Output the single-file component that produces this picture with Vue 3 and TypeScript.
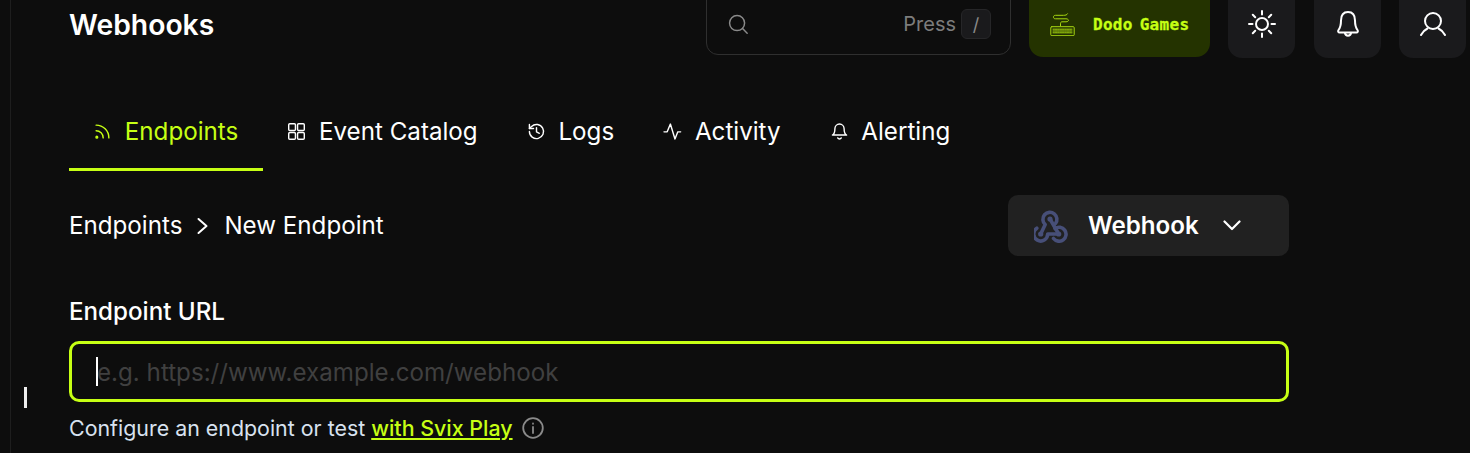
<script setup lang="ts">
const tabs = [
  { label: 'Endpoints', icon: 'rss', active: true },
  { label: 'Event Catalog', icon: 'grid', active: false },
  { label: 'Logs', icon: 'history', active: false },
  { label: 'Activity', icon: 'activity', active: false },
  { label: 'Alerting', icon: 'bell', active: false },
]
</script>

<template>
  <div class="page">
    <aside class="rail"><span class="ibeam"></span></aside>
    <main class="main">
      <header class="header">
        <h1 class="title">Webhooks</h1>
        <div class="search">
          <svg class="search-icon" viewBox="0 0 24 24" fill="none" stroke="currentColor" stroke-width="1.6" stroke-linecap="round"><circle cx="11" cy="11" r="8.2"/><path d="M17 17l5 5"/></svg>
          <span class="press">Press</span>
          <kbd class="kbd">/</kbd>
        </div>
        <div class="org">
          <svg class="org-icon" viewBox="0 0 25 23" fill="none" stroke="currentColor" stroke-width="1" stroke-linecap="round">
            <path d="M17.5.8c-.5 1.200-2 1.500-4 1.500H5.500c-1.500 0-2 .8-2 1.800s.5 1.700 2 1.700h10.500c1.500 0 2.500.8 2.500 1.500s-1 1.500-2.500 1.500H12c-1 0-1.500.7-1.500 2v2.100"/>
            <rect x=".8" y="13.700" width="23.400" height="9" rx="1"/>
            <path d="M3 16.200h19M3 18h19M3 19.800h19" stroke-dasharray="1 .7"/>
          </svg>
          <span class="org-name">Dodo Games</span>
        </div>
        <button class="icon-btn sun" type="button" aria-label="Theme">
          <svg viewBox="0 0 28 28" fill="none" stroke="currentColor" stroke-width="2" stroke-linecap="round"><circle cx="14" cy="14" r="6"/><path d="M14 1v3.500M14 23.500V27M1 14h3.500M23.500 14H27M4.800 4.800l2.400 2.400M20.800 20.800l2.400 2.400M4.800 23.200l2.400-2.400M20.800 7.200l2.400-2.400"/></svg>
        </button>
        <button class="icon-btn bell-btn" type="button" aria-label="Notifications">
          <svg viewBox="0 0 24 28" fill="none" stroke="currentColor" stroke-width="2" stroke-linejoin="round" stroke-linecap="round"><path d="M12 2c-5 0-7 4-7 8.500 0 5-1 7.500-2.500 9.500-1 1.500 0 2.500 1 2.500h17c1 0 2-1 1-2.500-1.500-2-2.500-4.500-2.500-9.500C19 6 17 2 12 2z"/><path d="M9 23c.5 3.500 5.500 3.500 6 0"/></svg>
        </button>
        <button class="icon-btn user-btn" type="button" aria-label="Account">
          <svg viewBox="0 0 26 26" fill="none" stroke="currentColor" stroke-width="2" stroke-linecap="round"><circle cx="13" cy="10" r="8"/><path d="M1 24c1.500-3 3.500-5 6.500-6.500M25 24c-1.500-3-3.500-5-6.500-6.500"/></svg>
        </button>
      </header>

      <nav class="tabs">
        <a v-for="t in tabs" :key="t.label" class="tab" :class="{ active: t.active }">
          <svg class="tab-icon" viewBox="0 0 24 24" fill="none" stroke="currentColor" stroke-width="2" stroke-linecap="round" stroke-linejoin="round">
            <template v-if="t.icon === 'rss'">
              <path d="M3 11a10 10 0 0 1 10 10"/><path d="M3 3a18 18 0 0 1 18 18"/><circle cx="4" cy="20" r="1.200"/>
            </template>
            <template v-else-if="t.icon === 'grid'">
              <rect x="1" y="1" width="9.500" height="9.500" rx="1.500"/><rect x="13.500" y="1" width="9.500" height="9.500" rx="1.500"/><rect x="1" y="13.500" width="9.500" height="9.500" rx="1.500"/><rect x="13.500" y="13.500" width="9.500" height="9.500" rx="1.500"/>
            </template>
            <template v-else-if="t.icon === 'history'">
              <path d="M2 12a10 10 0 1 0 3-7.100L2 7.800"/><path d="M2 2v5.800h5.800"/><path d="M12 6.500v6l4 2"/>
            </template>
            <template v-else-if="t.icon === 'activity'">
              <path d="M0 12.500h4.500l4.500-11 6.500 21 4-10h4"/>
            </template>
            <template v-else>
              <path d="M5.500 8a6.500 6.500 0 0 1 13 0c0 7 3.500 9 3.500 9H2s3.500-2 3.500-9"/><path d="M9.500 21a2.800 2.800 0 0 0 5 0"/>
            </template>
          </svg>
          <span>{{ t.label }}</span>
        </a>
      </nav>

      <section class="content">
        <div class="crumb-row">
          <div class="crumbs">
            <span>Endpoints</span>
            <svg class="crumb-sep" viewBox="0 0 12 18" fill="none" stroke="currentColor" stroke-width="2" stroke-linecap="round" stroke-linejoin="round"><path d="M2.500 2l8 7-8 7"/></svg>
            <span>New Endpoint</span>
          </div>
          <button class="type-select" type="button">
            <svg class="hook" viewBox="6 4 34 34" fill="none" stroke="#474f78" stroke-width="3.600" stroke-linecap="round" stroke-linejoin="round">
              <path d="M12.700 29L17.200 19.500A7 7 0 1 1 27.500 18.500"/>
              <path d="M22 14L30.700 29"/>
              <path d="M27 23.500A7 7 0 1 1 25.500 33.500"/>
              <path d="M30.700 29H19.700A7 7 0 1 1 8.800 23.200"/>
              <circle cx="22" cy="14" r="2.600" fill="#474f78" stroke="none"/>
              <circle cx="12.700" cy="29" r="2.600" fill="#474f78" stroke="none"/>
              <circle cx="30.700" cy="29" r="2.600" fill="#474f78" stroke="none"/>
            </svg>
            <span class="type-label">Webhook</span>
            <svg class="chev" viewBox="0 0 18 11" fill="none" stroke="currentColor" stroke-width="2.200" stroke-linecap="round" stroke-linejoin="round"><path d="M1.500 1.500L9 9l7.500-7.500"/></svg>
          </button>
        </div>

        <label class="field-label">Endpoint URL</label>
        <div class="input">
          <span class="caret"></span>
          <span class="placeholder">e.g. https://www.example.com/webhook</span>
        </div>
        <p class="help"><span>Configure an endpoint or test</span><a class="link">with Svix Play</a><svg class="info" viewBox="0 0 22 22" fill="none" stroke="currentColor" stroke-width="1.800" stroke-linecap="round"><circle cx="11" cy="11" r="9.800"/><path d="M11 10v6M11 6.500v.3"/></svg></p>
      </section>
    </main>
  </div>
</template>

<style>
html, body { margin: 0; background: #0d0d0d; }
</style>

<style scoped>
.page {
  display: flex;
  width: 1470px;
  height: 453px;
  overflow: hidden;
  background: #0d0d0d;
  color: #fff;
  font-family: Inter, "Liberation Sans", sans-serif;
}
.rail {
  position: relative;
  width: 10px;
  flex: none;
  border-right: 1px solid #1e1e1e;
}
.ibeam {
  position: absolute;
  left: 24px;
  top: 387px;
  width: 3px;
  height: 21px;
  background: #eee;
}
.main {
  flex: 1;
  min-width: 0;
  padding-left: 58px;
}
.header {
  display: flex;
  align-items: flex-end;
  height: 58px;
  overflow: hidden;
  padding-right: 4px;
}
.title {
  margin: 0 auto 13px 0;
  font-size: 28.3px;
  line-height: 40px;
  font-weight: 600;
}
.search {
  display: flex;
  align-items: center;
  width: 305px;
  height: 80px;
  margin-bottom: 3px;
  box-sizing: border-box;
  padding: 18px 19px 0 20px;
  border: 1px solid #2f2f2f;
  border-radius: 12px;
  color: #8a8a8a;
}
.search-icon { width: 22px; height: 22px; }
.press { margin-left: auto; font-size: 20px; color: #7c7c7c; }
.kbd {
  display: flex;
  align-items: center;
  justify-content: center;
  width: 30px;
  height: 30px;
  margin-left: 5px;
  background: #1a1a1c;
  border: 1px solid #262628;
  border-radius: 6px;
  box-sizing: border-box;
  font: 400 18px Inter, sans-serif;
  color: #8a8a8a;
}
.org {
  display: flex;
  align-items: center;
  width: 181px;
  height: 80px;
  margin-left: 18px;
  margin-bottom: 1px;
  box-sizing: border-box;
  padding: 14px 0 0 21px;
  background: #243300;
  border-radius: 14px;
  color: #c6ff14;
}
.org-icon { width: 25px; height: 23px; flex: none; color: #a8d810; }
.org-name {
  margin-left: 18px;
  font-family: "DejaVu Sans Mono", monospace;
  font-weight: 700;
  font-size: 16px;
  word-spacing: -3px;
  letter-spacing: 0.3px;
  -webkit-text-stroke: 0.3px #c6ff14;
}
.icon-btn {
  display: flex;
  align-items: center;
  justify-content: center;
  width: 67px;
  height: 80px;
  padding: 12px 0 0;
  background: #1a1a1c;
  border: 0;
  border-radius: 14px;
  color: #fff;
}
.sun { margin-left: 18px; }
.bell-btn { margin-left: 19px; }
.user-btn { margin-left: 18px; }
.sun svg { width: 28px; height: 28px; }
.bell-btn svg { width: 24px; height: 28px; }
.user-btn svg { width: 26px; height: 26px; }
.tabs {
  display: flex;
  height: 113px;
  box-sizing: border-box;
  padding-top: 45px;
}
.tab {
  display: flex;
  align-items: flex-start;
  gap: 13.8px;
  height: 68px;
  box-sizing: border-box;
  padding: 0 25px;
  font-size: 24.16px;
  line-height: 58px;
  color: #fff;
}
.tab-icon { width: 17px; height: 17px; margin-top: 20px; flex: none; overflow: visible; }
.tab.active {
  color: #c6ff14;
  border-bottom: 3px solid #c6ff14;
}
.content { width: 1220px; }
.crumb-row {
  display: flex;
  align-items: center;
  justify-content: space-between;
  margin-top: 24px;
  height: 61px;
}
.crumbs {
  display: flex;
  align-items: center;
  font-size: 24.16px;
}
.crumb-sep { width: 12px; height: 18px; margin: 0 16px 0 14px; }
.type-select {
  display: flex;
  align-items: center;
  width: 281px;
  height: 61px;
  padding: 0 0 0 26px;
  background: #212121;
  border: 0;
  border-radius: 10px;
  color: #fff;
  font: inherit;
}
.hook { width: 34px; height: 34px; flex: none; }
.type-label { margin-left: 20px; font-size: 24.16px; font-weight: 600; }
.chev { width: 18px; height: 11px; margin-left: 24px; }
.field-label {
  display: block;
  margin-top: 40px;
  font-size: 24.16px;
  line-height: 32px;
  font-weight: 550;
}
.input {
  position: relative;
  display: flex;
  align-items: center;
  height: 61px;
  margin-top: 13px;
  box-sizing: border-box;
  padding: 1px 0 0 25px;
  border: 3px solid #c6ff14;
  border-radius: 10px;
}
.caret {
  position: absolute;
  left: 24px;
  top: 13px;
  width: 2px;
  height: 29px;
  background: #fff;
}
.placeholder { font-size: 24.16px; color: #404040; }
.help {
  display: flex;
  align-items: center;
  margin: 11px 0 0;
  font-size: 21.4px;
  line-height: 30px;
  color: #d8e2f0;
  white-space: pre;
}
.link {
  margin-left: 6px;
  color: #c6ff14;
  font-weight: 500;
  text-decoration: underline;
}
.info { width: 22px; height: 22px; margin-left: 9px; color: #8a8a8a; }
</style>
